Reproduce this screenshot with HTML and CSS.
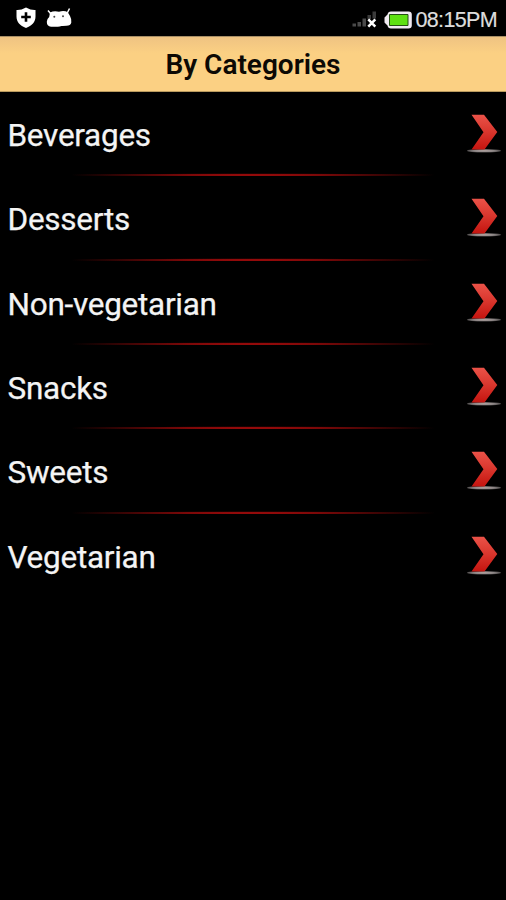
FILE: index.html
```html
<!DOCTYPE html>
<html lang="en">
<head>
    <meta charset="UTF-8">
    <meta name="viewport" content="width=device-width, initial-scale=1.0">
    <title>By Categories</title>
    <link rel="stylesheet" href="styles.css">
</head>
<body>
    <svg class="defs" width="0" height="0">
        <defs>
            <linearGradient id="red" x1="0" y1="0" x2="0" y2="1">
                <stop offset="0" stop-color="#ea5248"/>
                <stop offset="0.5" stop-color="#d9362d"/>
                <stop offset="1" stop-color="#c5140f"/>
            </linearGradient>
            <radialGradient id="shade">
                <stop offset="0" stop-color="#b5a5a2"/>
                <stop offset="0.6" stop-color="#8c8585"/>
                <stop offset="1" stop-color="#4a4747"/>
            </radialGradient>
            <symbol id="arrow" viewBox="0 0 36 40">
                <ellipse cx="18" cy="36.8" rx="17.2" ry="1.8" fill="url(#shade)"/>
                <path d="M5.5 .8h12.500l13.300 17.200L18.500 35.500H5.500L17.500 18.200z" fill="url(#red)"/>
            </symbol>
        </defs>
    </svg>

    <div class="status-bar">
        <svg class="shield" width="22" height="22" viewBox="0 0 22 22">
            <path d="M11 .5Q6 3.3 1.5 3v6.5C1.5 15 5 18.7 11 21c6-2.3 9.5-6 9.5-11.5V3Q16 3.3 11 .5z" fill="#fff"/>
            <path d="M11 5.2v9.6M6.2 10h9.600" stroke="#000" stroke-width="2.6"/>
        </svg>
        <svg class="robot" width="26" height="20" viewBox="0 0 26 20">
            <path d="M2 2.500l3 3.500M23.500 .5l-2.500 5" stroke="#fff" stroke-width="1.500"/>
            <path d="M4 4.500Q8 2.600 13 3.800 18 2 21.800 4.300L24 8Q25.700 11 25.300 14.500 24.600 17.800 20.500 17.800 17 18 15.500 17.900 13.500 18.900 11 18.700L5 18.800Q.8 18.500.8 13.800.8 11 3.200 9z" fill="#fff"/>
            <circle cx="8.300" cy="8.800" r="1" fill="#444"/>
            <circle cx="17" cy="8.300" r="1" fill="#444"/>
        </svg>
        <div class="status-right">
            <svg class="signal" width="26" height="18" viewBox="0 0 26 18">
                <path d="M.5 12.500h3.500v3H.5zM5.500 11h3.500v4.500H5.500zM10.500 7.500h3.500v8h-3.500z" fill="#4a4a4a"/>
                <path d="M15.500 4h3.500v4h-3.500zM20.500.5h3.500v7h-3.500z" fill="#3c3c3c"/>
                <path d="M16.300 8.300l7 7.400M23.300 8.300l-7 7.400" stroke="#fff" stroke-width="2.500"/>
            </svg>
            <svg class="battery" width="28" height="18" viewBox="0 0 28 18">
                <path d="M7 .5h17.500q3.300 0 3.300 3v11q0 3-3.300 3H7q-3 0-3.500-3L.5 11.500v-5L3.500 3.500q.5-3 3.500-3z" fill="#f1eaf1"/>
                <path d="M5.500 3.500h18.500v11H5.500z" fill="#5fe012" stroke="#244e12"/>
            </svg>
            <span class="clock">08:15PM</span>
        </div>
    </div>

    <h1 class="title">By Categories</h1>

    <ul class="categories">
        <li><span>Beverages</span><svg class="arrow"><use href="#arrow"/></svg></li>
        <li><span>Desserts</span><svg class="arrow"><use href="#arrow"/></svg></li>
        <li><span>Non-vegetarian</span><svg class="arrow"><use href="#arrow"/></svg></li>
        <li><span>Snacks</span><svg class="arrow"><use href="#arrow"/></svg></li>
        <li><span>Sweets</span><svg class="arrow"><use href="#arrow"/></svg></li>
        <li><span>Vegetarian</span><svg class="arrow"><use href="#arrow"/></svg></li>
    </ul>
</body>
</html>
```
FILE: styles.css
```css
* {
    box-sizing: border-box;
}
body {
    margin: 0;
    height: 900px;
    overflow: hidden;
    background: #000;
    color: #f4f4f4;
    font-family: Roboto, "Liberation Sans", sans-serif;
}
.defs {
    position: absolute;
}
.status-bar {
    display: flex;
    align-items: flex-start;
    height: 36px;
    padding: 7px 9px 0 15px;
}
.robot {
    margin: 1px 0 0 9px;
}
.status-right {
    display: flex;
    align-items: flex-start;
    margin-left: auto;
}
.signal {
    margin: 4px 6px 0 0;
}
.battery {
    margin: 4px 3px 0 0;
}
.clock {
    font-family: "Liberation Sans", Arial, sans-serif;
    font-size: 21.5px;
    line-height: 26px;
    letter-spacing: -0.65px;
    color: #ddd;
    -webkit-text-stroke: 0.2px #ddd;
}
.title {
    margin: 0;
    height: 56px;
    border-top: 1px solid #a88f66;
    border-bottom: 1px solid #b99a5e;
    background: linear-gradient(#efc382, #fbd083 30%, #fbd083);
    color: #0c0904;
    font-size: 28px;
    font-weight: 600;
    line-height: 56px;
    text-align: center;
}
.categories {
    list-style: none;
    margin: 0;
    padding: 0;
}
.categories li {
    display: flex;
    justify-content: space-between;
    align-items: flex-start;
    height: 84.35px;
    padding: 22px 4px 0 7.5px;
    background: radial-gradient(ellipse 190px 1.7px at 50% 50%, #c00e0e, #7c0808 45%, transparent) center bottom -1px / 100% 4px no-repeat;
}
.categories li:last-child {
    background: none;
}
.categories span {
    margin-top: 1px;
    font-size: 31.5px;
    line-height: 42px;
    letter-spacing: -0.27px;
    -webkit-text-stroke: 0.25px #f4f4f4;
}
.arrow {
    width: 36px;
    height: 40px;
}
```
